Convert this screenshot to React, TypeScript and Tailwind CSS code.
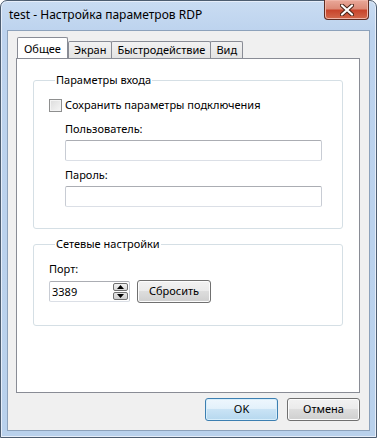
import React from 'react';

const font = { fontFamily: '"Noto Sans", "Open Sans", sans-serif' };

function Tab({ label, active }: { label: string; active?: boolean }) {
  if (active) {
    return (
      <div className="relative z-10 -mb-px flex h-[21px] items-start rounded-t-[2px] border border-b-0 border-[#898c95] bg-white px-[6px] pt-[3px]">
        {label}
      </div>
    );
  }
  return (
    <div className="-ml-px flex h-[17px] items-center self-end rounded-t-[2px] border border-b-0 border-[#898c95] bg-[linear-gradient(#f2f2f2,#e3e3e3)] px-[5px] first:ml-0">
      {label}
    </div>
  );
}

function TextBox({ className = '' }: { className?: string }) {
  return <div className={`h-[21px] rounded-[2px] border border-[#abadb3] border-b-[#dbdfe6] border-l-[#c8ccd4] border-r-[#c8ccd4] bg-white ${className}`} />;
}

function Button({ label, primary, className = '' }: { label: string; primary?: boolean; className?: string }) {
  return (
    <div
      className={`flex h-[23px] items-center justify-center rounded-[3px] border ${
        primary
          ? 'border-[#3c7fb1] bg-[linear-gradient(#eef7fd_0%,#e3f1fb_45%,#c9e3f5_50%,#b6d8ef_100%)] shadow-[inset_0_0_0_1px_#d8eefb]'
          : 'border-[#707070] bg-[linear-gradient(#f2f2f2_0%,#ebebeb_45%,#dddddd_50%,#cfcfcf_100%)] shadow-[inset_0_0_0_1px_#fcfcfc]'
      } ${className}`}
    >
      {label}
    </div>
  );
}

function Group({ title, children, className = '' }: { title: string; children: React.ReactNode; className?: string }) {
  return (
    <fieldset className={`rounded-[3px] border border-[#d5dfe5] px-[15px] ${className}`}>
      <legend className="ml-[6px] px-[1px] leading-[16px]">{title}</legend>
      {children}
    </fieldset>
  );
}

export default function App() {
  return (
    <div className="h-[438px] w-[377px] text-[11px] text-black" style={font}>
      <div className="flex h-full flex-col rounded-t-[7px] border border-[#4d5d70] bg-[linear-gradient(#c9dcf2,#bdd3ee_30px,#b9d1ec)] px-[6px] pb-[6px] shadow-[inset_0_0_0_1px_#e6eefa]">
        {/* title bar */}
        <div className="flex h-[29px] shrink-0 items-start justify-between">
          <div className="pl-[2px] pt-[6px] text-[12px] leading-[16px] text-black">test - Настройка параметров RDP</div>
          <div className="-mt-px mr-[1px] flex h-[20px] w-[45px] items-center justify-center rounded-b-[4px] border border-t-0 border-[#5e2c22] bg-[linear-gradient(#e9a899_0%,#dd8b78_45%,#c8452c_55%,#d2694c_100%)] shadow-[inset_0_0_0_1px_#f0b5a8]">
            <svg width="14" height="12" viewBox="0 0 14 12">
              <path d="M2 1.5 L12 10.5 M12 1.5 L2 10.5" stroke="#4a2418" strokeWidth="4.2" strokeLinecap="round" />
              <path d="M2 1.5 L12 10.5 M12 1.5 L2 10.5" stroke="#ffffff" strokeWidth="2.2" strokeLinecap="round" />
            </svg>
          </div>
        </div>

        {/* client area */}
        <div className="flex flex-1 flex-col border border-[#8da2bb] bg-[#f0f0f0]">
          <div className="ml-[8px] mr-[9px] mt-[6px] flex flex-col">
            <div className="flex h-[21px] pl-[1px]">
              <Tab label="Общее" active />
              <div className="flex self-end">
                <Tab label="Экран" />
                <Tab label="Быстродействие" />
                <Tab label="Вид" />
              </div>
            </div>
            <div className="h-[335px] border border-[#898c95] bg-white pl-[16px] pr-[16px] pt-[13px]">
              <Group title="Параметры входа" className="pb-[21px]">
                <div className="mt-[9px] flex h-[16px] items-center">
                  <div className="h-[13px] w-[13px] border border-[#8e8f8f] bg-[linear-gradient(135deg,#dcdcdc,#f6f6f6)] shadow-[inset_0_0_0_1px_#f4f4f4]" />
                  <span className="ml-[3px] leading-[16px]">Сохранить параметры подключения</span>
                </div>
                <div className="pl-[16px] pr-[5px]">
                  <div className="mt-[8px] leading-[16px]">Пользователь:</div>
                  <TextBox className="mt-[3px]" />
                  <div className="mt-[6px] leading-[16px]">Пароль:</div>
                  <TextBox className="mt-[3px]" />
                </div>
              </Group>
              <Group title="Сетевые настройки" className="mt-[7px] pb-[22px]">
                <div className="mt-[9px] leading-[16px]">Порт:</div>
                <div className="mt-[3px] flex items-center">
                  <div className="flex h-[21px] w-[81px] items-center rounded-[2px] border border-[#abadb3] border-b-[#dbdfe6] border-l-[#c8ccd4] border-r-[#c8ccd4] bg-white pl-[2px]">
                    <span className="flex-1 leading-[16px]">3389</span>
                    <div className="mr-[1px] flex h-[17px] w-[15px] flex-col gap-px">
                      <div className="flex flex-1 items-center justify-center rounded-[2px] border border-[#707070] bg-[linear-gradient(#f2f2f2,#d8d8d8)]">
                        <svg width="7" height="4" viewBox="0 0 7 4"><path d="M0 4 L3.5 0 L7 4 Z" fill="#000" /></svg>
                      </div>
                      <div className="flex flex-1 items-center justify-center rounded-[2px] border border-[#707070] bg-[linear-gradient(#e6e6e6,#cfcfcf)]">
                        <svg width="7" height="4" viewBox="0 0 7 4"><path d="M0 0 L3.5 4 L7 0 Z" fill="#000" /></svg>
                      </div>
                    </div>
                  </div>
                  <Button label="Сбросить" className="ml-[7px] w-[74px]" />
                </div>
              </Group>
            </div>
          </div>
          <div className="mr-[9px] mt-[5px] flex justify-end gap-[9px]">
            <Button label="OK" primary className="w-[73px]" />
            <Button label="Отмена" className="w-[73px]" />
          </div>
        </div>
      </div>
    </div>
  );
}
